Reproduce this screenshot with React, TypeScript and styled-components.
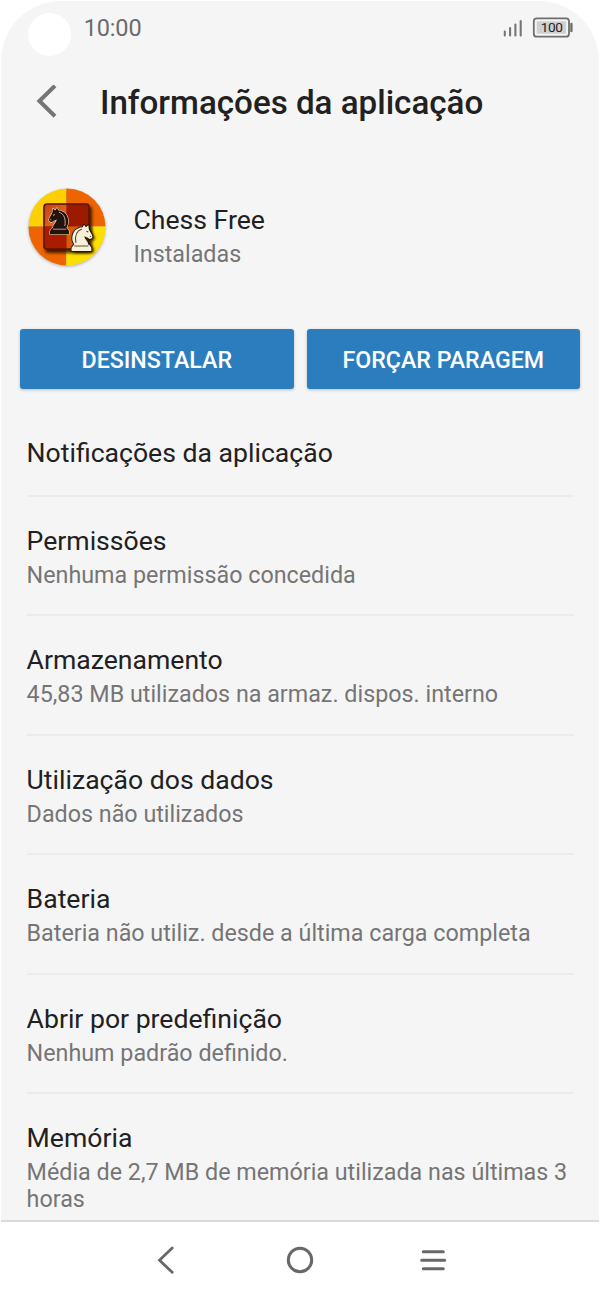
import React from 'react';
import styled, { createGlobalStyle } from 'styled-components';

const GlobalStyle = createGlobalStyle`
  * { box-sizing: border-box; }
  body { margin: 0; background: #fff; font-family: Roboto, "Liberation Sans", sans-serif; }
`;

const Phone = styled.div`
  width: 600px;
  height: 1300px;
  padding: 1px;
  background: #fff;
  overflow: hidden;
`;

const Screen = styled.main`
  height: 1298px;
  display: flex;
  flex-direction: column;
  background: #f5f5f5;
  border-radius: 60px;
  overflow: hidden;
`;

const StatusBar = styled.header`
  height: 68px;
  flex: none;
  display: flex;
  align-items: flex-start;
  padding: 12px 25px 0 27px;
`;

const Camera = styled.div`
  width: 43px;
  height: 43px;
  border-radius: 50%;
  background: #fff;
`;

const Clock = styled.time`
  margin-left: 12.7px;
  font-size: 23.5px;
  line-height: 30px;
  letter-spacing: -0.15px;
  color: #6b6b6b;
`;

const StatusIcons = styled.svg`
  margin-left: auto;
`;

const TitleBar = styled.div`
  height: 66px;
  flex: none;
  display: flex;
  align-items: center;
  padding-left: 34px;
`;

const Title = styled.h1`
  margin: 2px 0 0 43px;
  font-size: 33.15px;
  line-height: 40px;
  font-weight: 500;
  white-space: nowrap;
  color: #212121;
`;

const AppSummary = styled.section`
  height: 194px;
  flex: none;
  display: flex;
  padding: 51px 0 0 24.5px;
`;

const AppText = styled.div`
  padding: 17px 0 0 26px;
`;

const ItemTitle = styled.div`
  font-size: 26.6px;
  line-height: 34px;
  color: #212121;
  white-space: nowrap;
`;

const ItemDetail = styled.div`
  margin-top: 4px;
  font-size: 23.3px;
  line-height: 27px;
  color: #757575;
`;

const Actions = styled.div`
  display: grid;
  grid-template-columns: 1fr 1fr;
  gap: 13px;
  padding: 0 19px;
  flex: none;
`;

const ActionButton = styled.button`
  height: 60px;
  border: 0;
  border-radius: 3px;
  background: #2c7dbe;
  color: #fff;
  font: 500 23.2px/60px Roboto, "Liberation Sans", sans-serif;
  padding: 1px 0 0;
  display: flex;
  justify-content: center;
  align-items: flex-start;
  white-space: nowrap;
  box-shadow: 0 1px 3px rgba(0, 60, 110, 0.3);
`;

const Settings = styled.div`
  flex: 1;
  min-height: 0;
  overflow: hidden;
  padding: 0 25px 0 25.6px;
`;

const Row = styled.div<{ $single?: boolean }>`
  height: ${p => (p.$single ? '107.6px' : '119.5px')};
  padding-top: ${p => (p.$single ? '47px' : '27.2px')};
  border-bottom: 2px solid #ebebeb;

  &:last-child {
    border-bottom: 0;
  }
`;

const NavBar = styled.nav`
  height: 79px;
  flex: none;
  border-top: 2px solid #dadada;
  padding-bottom: 2px;
  background: #fff;
  display: flex;
  justify-content: center;
  align-items: center;
  gap: 93px;
`;

function Knight({ fill, line }: { fill: string; line: string }) {
  return (
    <>
      <path
        d="M4.6 20.6C4.4 16.8 8 14.9 8.4 11.8C6.8 12.8 5.6 12.5 4.4 13.8C3.2 15.2 1 14.4.5 12.5C1 9.5 3 7.6 4 4.9L4.5.8L6.8 2.8L8.6.3L10 2.9C16.5 3.2 20.6 8.6 19.8 15.8L17.9 20.6Z"
        fill={fill}
      />
      <path d="M10.6 4.6C15.6 6.2 17.7 11.2 16.4 18.4" fill="none" stroke={line} strokeWidth="1" />
      <path d="M4.6 7.6L6.4 6.8M2 12.4L2.9 11.9" stroke={line} strokeWidth="1.1" />
      <path d="M3.6 20.4H18.4L20.6 23.4V26.6H1.6V23.4Z" fill={fill} />
      <path d="M4.4 21.6H18" stroke={line} strokeWidth=".9" />
    </>
  );
}

function ChessIcon() {
  return (
    <svg width="82" height="84" viewBox="0 0 82 84">
      <defs>
        <clipPath id="disc"><circle cx="41" cy="41" r="38.5" /></clipPath>
        <linearGradient id="board" x1="0" y1="0" x2="1" y2="1">
          <stop offset="0" stopColor="#c8400c" /><stop offset="1" stopColor="#e47a3c" />
        </linearGradient>
        <filter id="soft" x="-30%" y="-30%" width="160%" height="160%"><feGaussianBlur stdDeviation="1.6" /></filter>
      </defs>
      <circle cx="41" cy="42.3" r="38.5" fill="#666" opacity=".45" filter="url(#soft)" />
      <g clipPath="url(#disc)">
        <path d="M0 0H40.3V40.5H0Z" fill="#fdd006" />
        <path d="M40.3 0H82V40.5H40.3Z" fill="#ee6400" />
        <path d="M0 40.5H40.3V82H0Z" fill="#ee6400" />
        <path d="M40.3 40.5H82V82H40.3Z" fill="#fee000" />
        <rect x="19" y="20" width="47" height="47" rx="4" fill="#260800" opacity=".85" filter="url(#soft)" />
      </g>
      <rect x="18" y="18" width="45" height="45" rx="3" fill="#9c1a00" />
      <path d="M18.5 40.5V21.5Q18.5 18.5 21 18.5H40.3V40.5Z" fill="url(#board)" />
      <path d="M40.3 40.5H62V63H40.3Z" fill="#d65b0c" />
      <path d="M18.5 40.5H40.3V63H20.5Q18.5 63 18.5 60Z" fill="#a91c00" />
      <rect x="18" y="18" width="45" height="45" rx="3" fill="none" stroke="#5e1500" strokeWidth="1.6" />
      <g transform="translate(22.4 21.6)">
        <g stroke="#f5d9b0" strokeWidth="1.1" strokeLinejoin="round"><Knight fill="#21130f" line="#b98c75" /></g>
        <Knight fill="#21130f" line="#cba58c" />
      </g>
      <g transform="matrix(-1.04 0 0 1 67 38.4)">
        <g transform="translate(-2 1.5)" filter="url(#soft)"><Knight fill="#150d05" line="#150d05" /></g>
        <g stroke="#24180d" strokeWidth="1.8" strokeLinejoin="round"><Knight fill="#24180d" line="#24180d" /></g>
        <Knight fill="#f8f0d9" line="#51422f" />
      </g>
    </svg>
  );
}

const settings = [
  ['Notificações da aplicação'],
  ['Permissões', 'Nenhuma permissão concedida'],
  ['Armazenamento', '45,83 MB utilizados na armaz. dispos. interno'],
  ['Utilização dos dados', 'Dados não utilizados'],
  ['Bateria', 'Bateria não utiliz. desde a última carga completa'],
  ['Abrir por predefinição', 'Nenhum padrão definido.'],
  ['Memória', 'Média de 2,7 MB de memória utilizada nas últimas 3 horas'],
];

export default function App() {
  return (
    <>
      <GlobalStyle />
      <Phone>
        <Screen>
          <StatusBar>
            <Camera />
            <Clock>10:00</Clock>
            <StatusIcons width="72" height="30" viewBox="0 0 72 30">
              <path d="M2.8 18.5V22.5M8.1 15V22.5M13.4 11.5V22.5M18.7 8V22.5" stroke="#757575" strokeWidth="2.1" strokeLinecap="round" />
              <rect x="31.8" y="5.3" width="35.2" height="18.4" rx="3" fill="#f5f5f5" stroke="#6e6e6e" strokeWidth="1.8" />
              <rect x="34.7" y="8.2" width="29.4" height="12.6" rx="1" fill="#d0d0d0" />
              <path d="M69.4 11V18" stroke="#6e6e6e" strokeWidth="2.4" strokeLinecap="round" />
              <text x="49.7" y="19" textAnchor="middle" fontFamily="Roboto, sans-serif" fontSize="13.6" letterSpacing="-0.3" fill="#212121">100</text>
            </StatusIcons>
          </StatusBar>
          <TitleBar>
            <svg width="22" height="34" viewBox="0 0 22 34" fill="none">
              <path d="M20 0.7L4.4 16L20 31.3" stroke="#757575" strokeWidth="4" />
            </svg>
            <Title>Informações da aplicação</Title>
          </TitleBar>
          <AppSummary>
            <ChessIcon />
            <AppText>
              <ItemTitle>Chess Free</ItemTitle>
              <ItemDetail>Instaladas</ItemDetail>
            </AppText>
          </AppSummary>
          <Actions>
            <ActionButton>DESINSTALAR</ActionButton>
            <ActionButton>FORÇAR PARAGEM</ActionButton>
          </Actions>
          <Settings>
            {settings.map(([title, detail]) => (
              <Row key={title} $single={!detail}>
                <ItemTitle>{title}</ItemTitle>
                {detail && <ItemDetail>{detail}</ItemDetail>}
              </Row>
            ))}
          </Settings>
          <NavBar>
            <svg width="40" height="32" viewBox="0 0 40 32" fill="none">
              <path d="M25.2 4L12.5 16.2L25.2 28.3" stroke="#686868" strokeWidth="2.8" strokeLinecap="round" />
            </svg>
            <svg width="40" height="32" viewBox="0 0 40 32" fill="none">
              <circle cx="20" cy="16" r="11.7" stroke="#686868" strokeWidth="3" />
            </svg>
            <svg width="40" height="32" viewBox="0 0 40 32" fill="none">
              <path d="M10.3 7.8H30.3M8.7 16.3H31.7M10.3 24.7H30.3" stroke="#686868" strokeWidth="3" strokeLinecap="round" />
            </svg>
          </NavBar>
        </Screen>
      </Phone>
    </>
  );
}
